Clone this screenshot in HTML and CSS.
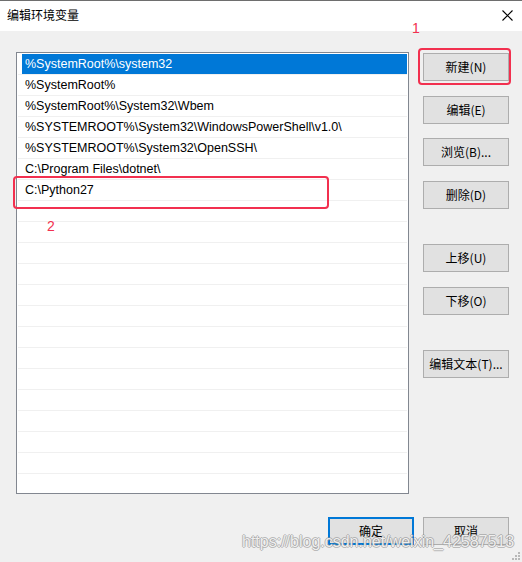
FILE: index.html
```html
<!DOCTYPE html>
<html>
<head>
<meta charset="utf-8">
<link rel="stylesheet" href="styles.css">
</head>
<body>
<div class="window">
  <div class="titlebar">
    <span class="title">编辑环境变量</span>
    <svg class="close" width="11" height="11" viewBox="0 0 11 11"><path d="M0.5 0.5 L10.5 10.5 M10.5 0.5 L0.5 10.5" stroke="#000" stroke-width="1.1" fill="none"/></svg>
  </div>
  <div class="body">
    <div class="main">
      <div class="list">
        <div class="row"><div class="cell selected">%SystemRoot%\system32</div></div>
        <div class="row"><div class="cell">%SystemRoot%</div></div>
        <div class="row"><div class="cell">%SystemRoot%\System32\Wbem</div></div>
        <div class="row"><div class="cell">%SYSTEMROOT%\System32\WindowsPowerShell\v1.0\</div></div>
        <div class="row"><div class="cell">%SYSTEMROOT%\System32\OpenSSH\</div></div>
        <div class="row"><div class="cell">C:\Program Files\dotnet\</div></div>
        <div class="row"><div class="cell">C:\Python27</div></div>
        <div class="row"><div class="cell"></div></div>
        <div class="row"><div class="cell"></div></div>
        <div class="row"><div class="cell"></div></div>
        <div class="row"><div class="cell"></div></div>
        <div class="row"><div class="cell"></div></div>
        <div class="row"><div class="cell"></div></div>
        <div class="row"><div class="cell"></div></div>
        <div class="row"><div class="cell"></div></div>
        <div class="row"><div class="cell"></div></div>
        <div class="row"><div class="cell"></div></div>
        <div class="row"><div class="cell"></div></div>
        <div class="row"><div class="cell"></div></div>
        <div class="row"><div class="cell"></div></div>
        <div class="row"><div class="cell"></div></div>
      </div>
      <div class="side">
        <button class="btn">新建(N)</button>
        <button class="btn">编辑(E)</button>
        <button class="btn">浏览(B)...</button>
        <button class="btn">删除(D)</button>
        <button class="btn gap-big">上移(U)</button>
        <button class="btn">下移(O)</button>
        <button class="btn gap-big">编辑文本(T)...</button>
      </div>
    </div>
    <div class="footer">
      <button class="btn default">确定</button>
      <button class="btn">取消</button>
    </div>
  </div>
  <div class="mark mark-1"></div>
  <div class="mark mark-2"></div>
  <span class="num num-1">1</span>
  <span class="num num-2">2</span>
  <span class="watermark">https://blog.csdn.net/weixin_42587513</span>
  <svg class="grip" width="8" height="8" viewBox="0 0 8 8">
    <rect x="6" y="0" width="2" height="2" fill="#b8b8b8"/>
    <rect x="3" y="3" width="2" height="2" fill="#b8b8b8"/>
    <rect x="6" y="3" width="2" height="2" fill="#b8b8b8"/>
    <rect x="0" y="6" width="2" height="2" fill="#b8b8b8"/>
    <rect x="3" y="6" width="2" height="2" fill="#b8b8b8"/>
    <rect x="6" y="6" width="2" height="2" fill="#b8b8b8"/>
  </svg>
</div>
</body>
</html>
```
FILE: styles.css
```css
* { box-sizing: border-box; }
html, body {
  margin: 0;
  padding: 0;
  background: #f0f0f0;
}
body {
  font-family: "Liberation Sans", "Noto Sans CJK SC", sans-serif;
  font-size: 12.5px;
  color: #000;
}
.window {
  position: relative;
  width: 522px;
  height: 562px;
  background: #f0f0f0;
  overflow: hidden;
}
.titlebar {
  height: 31px;
  background: #fff;
  border-top: 1px solid #6e6e6e;
  display: flex;
  align-items: center;
  justify-content: space-between;
  padding: 0 9px 0 7px;
}
.title {
  font-family: "Noto Sans CJK SC", sans-serif;
  font-size: 12px;
  line-height: 16px;
  margin-top: -2px;
}
.close {
  display: block;
  margin-top: -1px;
}
.body {
  padding: 21px 13px 0 16px;
}
.main {
  display: flex;
  gap: 14px;
}
.list {
  width: 393px;
  height: 442px;
  border: 1px solid #828790;
  background: #fff;
  padding: 1px 1px 0 1px;
  overflow: hidden;
}
.row {
  height: 21px;
  border-bottom: 1px solid #f0f0f0;
}
.cell {
  height: 20px;
  margin-left: 4px;
  padding-left: 3px;
  line-height: 20px;
  white-space: nowrap;
}
.cell.selected {
  background: #0078d7;
  color: #fff;
}
.side {
  display: flex;
  flex-direction: column;
  gap: 14.5px;
  padding-top: 1px;
}
.btn {
  width: 86px;
  height: 28px;
  background: #e1e1e1;
  border: 1px solid #adadad;
  font-family: "Noto Sans CJK SC", sans-serif;
  font-size: 12px;
  line-height: 16px;
  color: #000;
  padding: 0;
  margin: 0;
}
.side .gap-big {
  margin-top: 21px;
}
.footer {
  display: flex;
  justify-content: flex-end;
  gap: 9px;
  margin-top: 23px;
}
.btn.default {
  border: 2px solid #0078d7;
}
.mark {
  position: absolute;
  border: 2px solid #f2304f;
  border-radius: 4px;
}
.mark-1 {
  left: 418px;
  top: 48px;
  width: 93px;
  height: 37px;
}
.mark-2 {
  left: 13px;
  top: 176px;
  width: 316px;
  height: 33px;
}
.num {
  position: absolute;
  color: #f2304f;
  font-family: "Liberation Sans", sans-serif;
  font-size: 14px;
  line-height: 14px;
}
.num-1 { left: 412px; top: 21px; }
.num-2 { left: 47px; top: 219px; }
.watermark {
  position: absolute;
  left: 242px;
  top: 532px;
  font-family: "Liberation Sans", sans-serif;
  font-size: 16px;
  line-height: 20px;
  color: rgba(255, 255, 255, 0.85);
  text-shadow: 1px 0 0 rgba(140,140,140,0.55), -1px 0 0 rgba(140,140,140,0.55), 0 1px 0 rgba(140,140,140,0.55), 0 -1px 0 rgba(140,140,140,0.55);
  white-space: nowrap;
}
.grip {
  position: absolute;
  right: 2px;
  bottom: 2px;
}
```
